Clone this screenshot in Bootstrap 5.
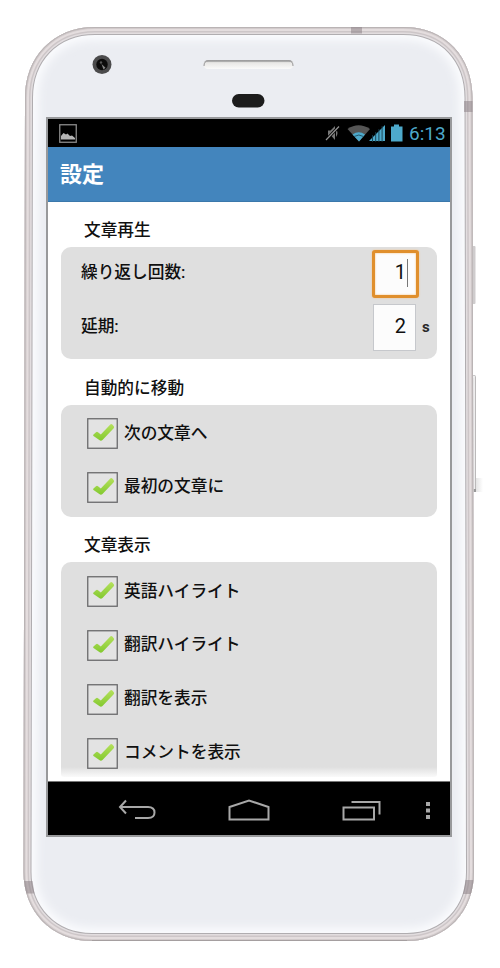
<!DOCTYPE html>
<html lang="ja">
<head>
<meta charset="utf-8">
<meta name="viewport" content="width=device-width, initial-scale=1">
<title>設定</title>
<link rel="stylesheet" href="https://cdn.jsdelivr.net/npm/bootstrap@5.3.0/dist/css/bootstrap.min.css">
<style>
  body { font-family: Roboto, "Noto Sans CJK JP", sans-serif; color: #101010; }
  .phone { width: 500px; height: 968px; padding: 117px 48px 0 46px; }
  .shell { left: 0; top: 0; z-index: 0; }
  .screen { z-index: 1; height: 720px; border: 2px solid #98999b; background: #fff; }
  .statusbar { height: 28px; padding: 0 6px 0 11px; background: #000; }
  .clock { color: #4da9cb; font-size: 19px; line-height: 1; width: 35px; margin: 1px 0 0 6px; white-space: nowrap; }
  .titlebar { height: 55px; padding: 2px 0 0 12px; background: #4385bd; color: #fff; border-bottom: 1px solid #3b78ab; }
  .titlebar h1 { font-size: 22px; font-weight: 700; line-height: 1; }
  .settings { height: 579px; padding: 16px 13px 0 13px; }
  .group-title { font-size: 16.7px; font-weight: 500; line-height: 26px; height: 26px; padding-left: 23px; margin: 0 0 3px; }
  .panel { background: #dfdfdf; border-radius: 10px; height: 112px; padding: 2.5px 0 1px; margin-bottom: 16.5px; }
  .panel-long { height: 215px; padding-top: 3px; margin: 0; border-radius: 10px 10px 3px 3px; background: linear-gradient(#dfdfdf 205px, #fafafa 215px); }
  .opt { height: 53.8px; font-size: 16.7px; font-weight: 500; line-height: 1; padding-left: 26px; gap: 6px; }
  .opt-num { padding: 0 6px 5px 20px; gap: 0; }
  .opt span.me-auto { padding-bottom: 1px; }
  .tick { width: 31px; height: 31px; flex: none; }
  .num { width: 43px; height: 47px; background: #fcfcfc; border: 1px solid #c6c8cc; font-size: 20px; font-weight: 400; padding: 0 9px 4px 0; margin-right: 6px; }
  .num.active { width: 47px; height: 48px; border: 3px solid #e08f2c; border-radius: 3px; box-shadow: inset 0 0 2px #f3b66a, 0 0 2px #f6c385; padding: 0 8px 4px 0; margin-right: 12px; }
  .caret { width: 1px; height: 28px; background: #777; margin-top: 2px; margin-left: 1px; }
  .unit { font-size: 15px; font-weight: 700; color: #2a2a2a; width: 9px; }
  .navkeys { height: 54px; background: #000; border-top: 1px solid #777; padding: 4px 0 0 69px; }
  .key-home { margin: 0 72px 0 71px; }
  .key-menu { margin-left: 44px; }
</style>
<script src="https://cdn.jsdelivr.net/npm/bootstrap@5.3.0/dist/js/bootstrap.bundle.min.js"></script>
</head>
<body class="bg-white m-0">
<svg width="0" height="0" class="position-absolute" aria-hidden="true">
  <defs>
    <linearGradient id="green" x1="0" y1="0" x2="0" y2="1"><stop offset="0" stop-color="#b5e05c"/><stop offset="1" stop-color="#82c92f"/></linearGradient>
    <symbol id="tick" viewBox="0 0 31 31">
      <rect x=".75" y=".75" width="29.5" height="29.5" fill="#e3e3e3" stroke="#6a6a6c" stroke-width="1.3"/>
      <path d="M6.500 16.500L9 14.200q1-.8 2 0l2.800 2.400L23.300 6.500q1-1 2 0l1.500 1.800q.7 1-.1 2L15.500 22q-1.600 1.500-3.200 0L6.500 18q-.9-.7 0-1.500z" fill="url(#green)"/>
    </symbol>
  </defs>
</svg>
<main class="phone position-relative overflow-hidden">
  <svg class="shell position-absolute" width="500" height="968" viewBox="0 0 500 968" aria-hidden="true">
    <defs>
      <path id="body" d="M95 27H403C446 27 472.500 57 472.500 98L474 872C474 911 447 941 407 941H92C51 941 23.500 911 23.500 872L25 98C25 57 53 27 95 27Z"/>
      <clipPath id="bodyclip"><use href="#body"/></clipPath>
      <filter id="soft" x="-10%" y="-10%" width="120%" height="120%"><feGaussianBlur stdDeviation="5"/></filter>
      <linearGradient id="slot" x1="0" y1="0" x2="0" y2="1"><stop offset="0" stop-color="#989898"/><stop offset=".3" stop-color="#e8e7e5"/><stop offset="1" stop-color="#fafafa"/></linearGradient>
      <linearGradient id="fade" x1="0" y1="0" x2="1" y2="0"><stop offset="0" stop-color="#ddd"/><stop offset="1" stop-color="#fff"/></linearGradient>
    </defs>
    <rect x="472" y="246" width="3.500" height="58" rx="1" fill="#cfcccd"/>
    <rect x="474" y="478" width="9" height="14" fill="url(#fade)"/>
    <rect x="472.500" y="375.500" width="3" height="116" rx="1" fill="#eee" stroke="#bbb9ba"/>
    <rect x="473" y="489" width="3" height="3" fill="#999"/>
    <use href="#body" fill="#ebedf2"/>
    <g clip-path="url(#bodyclip)" fill="none">
      <use href="#body" stroke="#fbfcfe" stroke-width="26" filter="url(#soft)"/>
      <use href="#body" stroke="#b0adb0" stroke-width="16"/>
      <use href="#body" stroke="#e2dddf" stroke-width="14"/>
      <use href="#body" stroke="#cdc6c8" stroke-width="11"/>
      <use href="#body" stroke="#e4ddde" stroke-width="8"/>
      <use href="#body" stroke="#d2cbcc" stroke-width="4"/>
      <use href="#body" stroke="#bab4b5" stroke-width="2"/>
      <g fill="#8e8488" fill-opacity=".55">
        <path d="M351 27h11v6.500h-11zM464 101h9v11h-9zM24 881h8.500l2 12.500h-9zM465.500 880h8l-2 14h-8.500z"/>
      </g>
      <path d="M92 940.500H407" stroke="#a59fa0"/>
    </g>
    <circle cx="102" cy="64.500" r="9.500" fill="#4b4b4c"/><circle cx="102" cy="64.500" r="5.700" fill="#0b0b0b"/><path d="M101.500 64l4 3.800-2 1.700z" fill="#888"/><circle cx="101" cy="62.500" r="1.200" fill="#555"/>
    <rect x="203.500" y="60" width="90" height="9" rx="4.500" fill="url(#slot)"/>
    <path d="M204 66q0-5 4-5h81q4 0 4 5" fill="none" stroke="#979799"/>
    <rect x="232" y="94" width="32.500" height="13.500" rx="6.750" fill="#1c1c1c"/>
  </svg>
  <section class="screen position-relative d-flex flex-column">
    <div class="statusbar d-flex align-items-center">
      <svg width="18" height="19" viewBox="0 0 18 19" aria-label="画像"><rect x=".75" y=".75" width="16.500" height="17.500" fill="none" stroke="#8b8b8b" stroke-width="1.300"/><path d="M2 15.500v-3.500l2.500-3 2.500 1.500 1.500-1 2.500 2.500 2-.5 3 2.500v1.500z" fill="#b5b5b5"/></svg>
      <svg class="ms-auto" width="78" height="20" viewBox="0 0 78 20" aria-hidden="true">
        <path d="M3 7.500h2.500L10 3v14l-3.500-4H3zM11 6q3 4 0 8z" fill="#777"/><path d="M1 17L14 3.500" stroke="#000" stroke-width="3"/><path d="M1 17L14 3.500" stroke="#949494" stroke-width="1.200"/>
        <path d="M22.500 6Q33.500-1.500 45 6L34 18.500z" fill="#555"/><path d="M27.500 11.500q6.300-4.500 12.500 0L34 18.500z" fill="#4da9cb"/><path d="M29 13.500q5-3 9.500 0" fill="none" stroke="#22566a"/>
        <path d="M44 18L60 2v16z" fill="#4da9cb"/><path d="M47.500 12v7M50.700 9v10M53.900 6v13M57.100 3v16" stroke="#163c4a" stroke-width=".9"/>
        <path d="M66 3.500h3V1.500h5v2h3.500v15H66z" fill="#4da9cb"/>
      </svg>
      <span class="clock">6:13</span>
    </div>
    <header class="titlebar d-flex align-items-center"><h1 class="m-0">設定</h1></header>
    <div class="settings overflow-hidden">
      <h2 class="group-title">文章再生</h2>
      <div class="panel">
        <div class="opt opt-num d-flex align-items-center"><span class="me-auto">繰り返し回数:</span><span class="num active d-flex align-items-center justify-content-end flex-shrink-0">1<i class="caret"></i></span></div>
        <div class="opt opt-num d-flex align-items-center"><span class="me-auto">延期:</span><span class="num d-flex align-items-center justify-content-end flex-shrink-0">2</span><span class="unit">s</span></div>
      </div>
      <h2 class="group-title">自動的に移動</h2>
      <div class="panel">
        <label class="opt d-flex align-items-center"><svg class="tick"><use href="#tick"/></svg>次の文章へ</label>
        <label class="opt d-flex align-items-center"><svg class="tick"><use href="#tick"/></svg>最初の文章に</label>
      </div>
      <h2 class="group-title">文章表示</h2>
      <div class="panel panel-long">
        <label class="opt d-flex align-items-center"><svg class="tick"><use href="#tick"/></svg>英語ハイライト</label>
        <label class="opt d-flex align-items-center"><svg class="tick"><use href="#tick"/></svg>翻訳ハイライト</label>
        <label class="opt d-flex align-items-center"><svg class="tick"><use href="#tick"/></svg>翻訳を表示</label>
        <label class="opt d-flex align-items-center"><svg class="tick"><use href="#tick"/></svg>コメントを表示</label>
      </div>
    </div>
    <nav class="navkeys d-flex align-items-center">
      <svg width="40" height="24" viewBox="0 0 40 24" fill="none" stroke="#a8a8a8" stroke-width="2" aria-label="戻る"><path d="M9 1.500L3 8l6 6.500M3 8h28q6.500 0 6.500 5.500T31 19H18"/></svg>
      <svg class="key-home" width="42" height="24" viewBox="0 0 42 24" fill="none" stroke="#a8a8a8" stroke-width="2" aria-label="ホーム"><path d="M1.500 8L21 1.500 40.500 8v12.500h-39z"/></svg>
      <svg width="39" height="24" viewBox="0 0 39 24" fill="none" stroke="#a8a8a8" stroke-width="2" aria-label="履歴"><path d="M1.500 8.500h30.500v12H1.500zM9.500 3H37.500v12.500"/></svg>
      <svg class="key-menu" width="6" height="20" viewBox="0 0 6 20" fill="#a8a8a8" aria-label="メニュー"><path d="M1 1h4v4H1zM1 7.500h4v4H1zM1 14h4v4H1z"/></svg>
    </nav>
  </section>
</main>
</body>
</html>
